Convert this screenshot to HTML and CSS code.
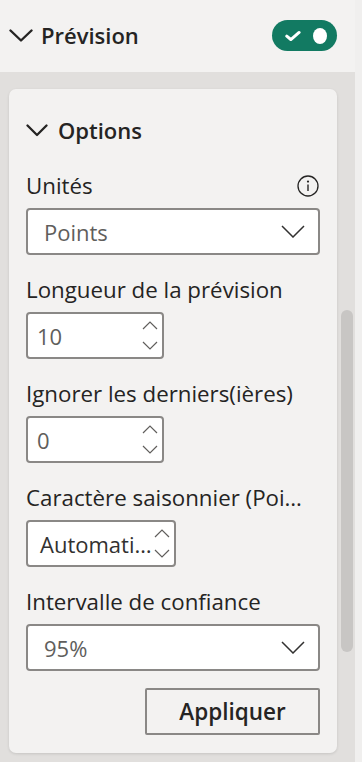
FILE: index.html
```html
<!DOCTYPE html>
<html lang="fr">

<head>
    <meta charset="UTF-8">
    <meta name="viewport" content="width=device-width, initial-scale=1.0">
    <title>Prévision</title>
    <link rel="stylesheet" href="styles.css">
</head>

<body>
    <div class="pane">
        <header class="section-header">
            <div class="section-title">
                <svg class="chevron-big" width="24" height="13" viewBox="0 0 24 13">
                    <path d="M1.5 1.5 L12 11.5 L22.5 1.5" fill="none" stroke="#252423" stroke-width="2.4" stroke-linecap="round" stroke-linejoin="round" />
                </svg>
                <span>Prévision</span>
            </div>
            <div class="toggle">
                <svg width="18" height="12" viewBox="0 0 18 12">
                    <path d="M2 6.2 L6.6 10 L16 2" fill="none" stroke="#fff" stroke-width="3.4" stroke-linecap="round" stroke-linejoin="round" />
                </svg>
                <span class="toggle-knob"></span>
            </div>
        </header>

        <div class="pane-body">
            <div class="card">
                <div class="card-title">
                    <svg width="22" height="13" viewBox="0 0 22 13">
                        <path d="M1.5 1.5 L11 11 L20.5 1.5" fill="none" stroke="#252423" stroke-width="2.3" stroke-linecap="round" stroke-linejoin="round" />
                    </svg>
                    <span>Options</span>
                </div>

                <div class="field">
                    <div class="field-label">
                        <span>Unités</span>
                        <svg width="22" height="22" viewBox="0 0 22 22">
                            <circle cx="11" cy="11" r="10" fill="none" stroke="#252423" stroke-width="1.3" />
                            <circle cx="11" cy="6.6" r="1.1" fill="#252423" />
                            <path d="M11 9.5 V16" stroke="#252423" stroke-width="1.4" />
                        </svg>
                    </div>
                    <div class="select">
                        <span>Points</span>
                        <svg width="24" height="13" viewBox="0 0 24 13">
                            <path d="M1 1 L12 12 L23 1" fill="none" stroke="#323130" stroke-width="1.5" />
                        </svg>
                    </div>
                </div>

                <div class="field">
                    <div class="field-label">Longueur de la prévision</div>
                    <div class="spin">
                        <span>10</span>
                        <div class="spin-arrows">
                            <svg width="16" height="9" viewBox="0 0 16 9"><path d="M1 8 L8 1 L15 8" fill="none" stroke="#605e5c" stroke-width="1.2" /></svg>
                            <svg width="16" height="9" viewBox="0 0 16 9"><path d="M1 1 L8 8 L15 1" fill="none" stroke="#605e5c" stroke-width="1.2" /></svg>
                        </div>
                    </div>
                </div>

                <div class="field">
                    <div class="field-label">Ignorer les derniers(ières)</div>
                    <div class="spin">
                        <span>0</span>
                        <div class="spin-arrows">
                            <svg width="16" height="9" viewBox="0 0 16 9"><path d="M1 8 L8 1 L15 8" fill="none" stroke="#605e5c" stroke-width="1.2" /></svg>
                            <svg width="16" height="9" viewBox="0 0 16 9"><path d="M1 1 L8 8 L15 1" fill="none" stroke="#605e5c" stroke-width="1.2" /></svg>
                        </div>
                    </div>
                </div>

                <div class="field">
                    <div class="field-label">Caractère saisonnier (Poi…</div>
                    <div class="spin spin-wide">
                        <span class="spin-dark">Automati…</span>
                        <div class="spin-arrows">
                            <svg width="16" height="9" viewBox="0 0 16 9"><path d="M1 8 L8 1 L15 8" fill="none" stroke="#605e5c" stroke-width="1.2" /></svg>
                            <svg width="16" height="9" viewBox="0 0 16 9"><path d="M1 1 L8 8 L15 1" fill="none" stroke="#605e5c" stroke-width="1.2" /></svg>
                        </div>
                    </div>
                </div>

                <div class="field">
                    <div class="field-label">Intervalle de confiance</div>
                    <div class="select">
                        <span>95%</span>
                        <svg width="24" height="13" viewBox="0 0 24 13">
                            <path d="M1 1 L12 12 L23 1" fill="none" stroke="#323130" stroke-width="1.5" />
                        </svg>
                    </div>
                </div>

                <div class="actions">
                    <button class="apply-btn">Appliquer</button>
                </div>
            </div>

            <div class="scroll-track">
                <div class="scroll-thumb"></div>
            </div>
        </div>
    </div>
</body>

</html>
```

FILE: styles.css
```css
body {
    margin: 0;
    padding: 0;
    font-family: 'Open Sans', 'Noto Sans', sans-serif;
    color: #252423;
    background-color: #f0efee;
    height: 762px;
    overflow: hidden;
    display: flex;
}

.pane {
    width: 355px;
    display: flex;
    flex-direction: column;
    height: 100%;
}

.section-header {
    height: 72px;
    background-color: #f3f2f1;
    display: flex;
    align-items: center;
    justify-content: space-between;
    padding: 0 18px 0 9px;
    flex-shrink: 0;
}

.section-title {
    display: flex;
    align-items: center;
    gap: 8px;
    font-size: 22px;
    font-weight: 600;
    line-height: 30px;
    margin-top: -3px;
}

.chevron-big {
    margin-top: 1px;
}

.toggle {
    width: 65px;
    height: 31px;
    border-radius: 16px;
    background-color: #127a62;
    display: flex;
    align-items: center;
    box-sizing: border-box;
    padding: 0 10px 0 13px;
    gap: 12px;
    margin-top: -1px;
}

.toggle-knob {
    width: 16px;
    height: 16px;
    border-radius: 50%;
    background-color: #fff;
}

.pane-body {
    flex: 1;
    background-color: #e1dfdd;
    display: flex;
    padding: 17px 0 0 9px;
}

.card {
    width: 328px;
    height: 664px;
    box-sizing: border-box;
    background-color: #f3f2f1;
    border-radius: 7px;
    box-shadow: 0 1px 3px rgba(0, 0, 0, 0.12);
    padding: 27px 17px 0 17px;
    display: flex;
    flex-direction: column;
}

.card-title {
    display: flex;
    align-items: center;
    gap: 10px;
    font-size: 22px;
    font-weight: 600;
    line-height: 28px;
}

.card-title svg {
    margin-top: 1px;
}

.field {
    margin-top: 28px;
}

.field + .field {
    margin-top: 21px;
}

.field-label {
    font-size: 22.3px;
    line-height: 28px;
    margin-bottom: 8px;
    display: flex;
    align-items: center;
    justify-content: space-between;
    white-space: nowrap;
}

.field-label svg {
    margin-right: 1px;
}

.select,
.spin {
    height: 47px;
    box-sizing: border-box;
    border: 2px solid #8a8886;
    border-radius: 4px;
    background-color: #fff;
    display: flex;
    align-items: center;
    justify-content: space-between;
    font-size: 22px;
    color: #605e5c;
}

.select {
    padding: 0 13px 0 16px;
}

.spin {
    width: 138px;
    padding: 0 4px 0 9px;
}

.spin-wide {
    width: 150px;
    padding-left: 12px;
}

.spin-dark {
    color: #323130;
}

.spin-arrows {
    display: flex;
    flex-direction: column;
    gap: 11px;
}

.actions {
    display: flex;
    justify-content: flex-end;
    margin-top: 17px;
}

.apply-btn {
    width: 175px;
    height: 47px;
    border: 2px solid #8a8886;
    border-radius: 2px;
    background-color: #f3f2f1;
    font-family: 'Open Sans', 'Noto Sans', sans-serif;
    font-size: 22.5px;
    font-weight: 600;
    color: #252423;
}

.scroll-track {
    width: 18px;
    padding: 221px 0 0 4px;
    box-sizing: border-box;
}

.scroll-thumb {
    width: 12px;
    height: 342px;
    border-radius: 6px;
    background-color: #c8c6c4;
}
```
